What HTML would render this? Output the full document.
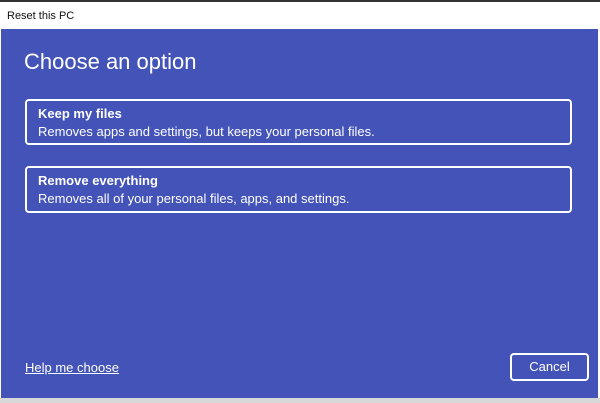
<!DOCTYPE html>
<html><head><style>
body{margin:0;width:600px;height:403px;overflow:hidden;background:#fff;font-family:"Liberation Sans",sans-serif;position:relative}
.top{position:absolute;left:0;top:0;width:600px;height:2px;background:#333}
.title{position:absolute;left:7px;top:10px;font-size:11px;color:#111}
.blue{position:absolute;left:1px;top:29px;width:597px;height:369px;background:#4353b7}
.bot{position:absolute;left:0;top:398px;width:600px;height:5px;background:#d8d8d8}
h1{position:absolute;left:24px;top:49px;margin:0;font-weight:normal;font-size:22px;color:#fff}
.card{position:absolute;left:25px;width:547px;border:2px solid #fff;border-radius:4px;color:#fff;box-sizing:border-box;padding:5px 0 0 11px}
.card b{display:block;font-size:13px;margin-bottom:2px}
.card span{font-size:13px}
.help{position:absolute;left:25px;top:360px;color:#fff;font-size:13px;text-decoration:underline}
.cancel{position:absolute;left:510px;top:353px;width:79px;height:28px;border:2px solid #fff;border-radius:4px;box-sizing:border-box;color:#fff;font-size:13px;text-align:center;line-height:24px}
</style></head><body>
<div class="top"></div>
<div class="title">Reset this PC</div>
<div class="blue"></div>
<div class="bot"></div>
<h1>Choose an option</h1>
<div class="card" style="top:99px;height:46px"><b>Keep my files</b><span>Removes apps and settings, but keeps your personal files.</span></div>
<div class="card" style="top:166px;height:47px"><b>Remove everything</b><span>Removes all of your personal files, apps, and settings.</span></div>
<div class="help">Help me choose</div>
<div class="cancel">Cancel</div>
</body></html>
